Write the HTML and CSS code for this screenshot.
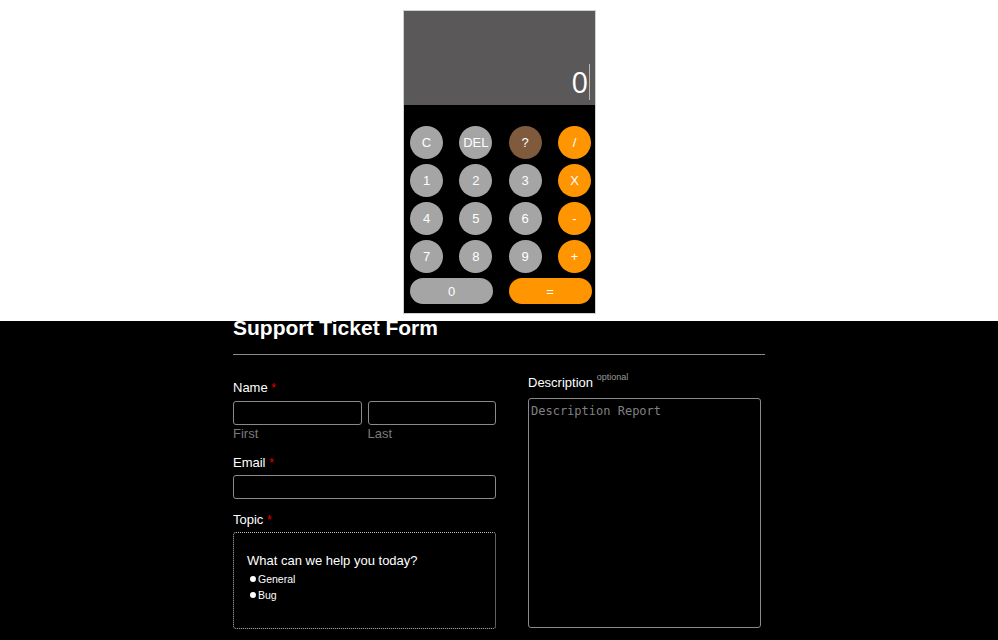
FILE: index.html
```html
<!DOCTYPE html>
<html>
<head>
<meta charset="utf-8">
<link rel="stylesheet" href="styles.css">
</head>
<body>
<section class="top">
  <div class="calc">
    <div class="display"><span class="value">0</span><span class="caret"></span></div>
    <div class="keys">
      <button class="key gray">C</button>
      <button class="key gray">DEL</button>
      <button class="key brown">?</button>
      <button class="key orange">/</button>
      <button class="key gray">1</button>
      <button class="key gray">2</button>
      <button class="key gray">3</button>
      <button class="key orange">X</button>
      <button class="key gray">4</button>
      <button class="key gray">5</button>
      <button class="key gray">6</button>
      <button class="key orange">-</button>
      <button class="key gray">7</button>
      <button class="key gray">8</button>
      <button class="key gray">9</button>
      <button class="key orange">+</button>
      <button class="key gray wide">0</button>
      <button class="key orange wide">=</button>
    </div>
  </div>
</section>
<section class="form-section">
  <div class="form-wrap">
    <h1 class="title">Support Ticket Form</h1>
    <hr class="rule">
    <div class="cols">
      <div class="col-left">
        <div class="label">Name <span class="req">*</span></div>
        <div class="name-row">
          <div class="name-field">
            <div class="input"></div>
            <div class="sub">First</div>
          </div>
          <div class="name-field">
            <div class="input"></div>
            <div class="sub">Last</div>
          </div>
        </div>
        <div class="label email-label">Email <span class="req">*</span></div>
        <div class="input"></div>
        <div class="label topic-label">Topic <span class="req">*</span></div>
        <div class="fieldset">
          <div class="question">What can we help you today?</div>
          <ul class="options">
            <li><span class="dot"></span>General</li>
            <li><span class="dot"></span>Bug</li>
          </ul>
        </div>
      </div>
      <div class="col-right">
        <div class="label desc-label">Description <sup class="opt">optional</sup></div>
        <div class="textarea"><span class="placeholder">Description Report</span></div>
      </div>
    </div>
  </div>
</section>
</body>
</html>
```
FILE: styles.css
```css
* { box-sizing: border-box; }
html, body { margin: 0; padding: 0; }
body {
  font-family: "Liberation Sans", Arial, sans-serif;
  background: #fff;
  height: 640px;
  overflow: hidden;
}
.top {
  height: 321px;
  background: #fff;
  padding-top: 10px;
  display: flex;
  justify-content: center;
}
.calc {
  width: 193px;
  height: 304px;
  border: 1px solid #d0d0d0;
  background: #000;
  margin-left: 1px;
  display: flex;
  flex-direction: column;
}
.display {
  height: 94px;
  background: #5a5858;
  display: flex;
  justify-content: flex-end;
  align-items: flex-end;
  padding: 0 5px 5px 0;
}
.value {
  color: #fff;
  font-family: "Open Sans", "Noto Sans", sans-serif;
  font-size: 29px;
  line-height: 36px;
  font-weight: 400;
}
.caret {
  width: 1px;
  height: 36px;
  background: #b8b8b8;
  margin-left: 1px;
}
.keys {
  display: grid;
  grid-template-columns: 33px 33px 33px 33px;
  grid-auto-rows: 33px;
  justify-content: space-between;
  row-gap: 5px;
  padding: 21px 4px 0 6px;
}
.key {
  border: none;
  border-radius: 50%;
  color: #fff;
  font-family: "Liberation Sans", Arial, sans-serif;
  font-size: 13px;
  padding: 0;
  width: 33px;
  height: 33px;
}
.gray { background: #a5a5a5; }
.orange { background: #ff9500; }
.brown { background: #7f5a3c; }
.wide {
  grid-column: span 2;
  width: 83px;
  height: 26px;
  border-radius: 13px;
}
.form-section {
  background: #000;
  height: 319px;
  display: flow-root;
}
.form-wrap {
  width: 532px;
  margin: 0 auto;
  color: #fff;
}
.title {
  margin: -6px 0 0 0;
  font-size: 21px;
  line-height: 26px;
  font-weight: bold;
  color: #fff;
}
.rule {
  margin: 13px 0 0 0;
  border: none;
  height: 1px;
  background: #8a8a8a;
}
.cols {
  display: grid;
  grid-template-columns: 263px 233px;
  column-gap: 32px;
}
.col-left { padding-top: 25px; }
.col-right { padding-top: 20px; }
.label {
  font-size: 13px;
  line-height: 16px;
  color: #fff;
}
.req { color: #e00000; font-size: 12px; }
.name-row {
  display: flex;
  gap: 6px;
  margin-top: 5px;
}
.name-field { flex: 1; }
.input {
  height: 24px;
  border: 1px solid #8a8a8a;
  border-radius: 3px;
  background: #000;
}
.sub {
  font-size: 13px;
  line-height: 16px;
  color: #7a7a7a;
  margin-top: 1px;
}
.email-label { margin-top: 13px; margin-bottom: 4px; }
.topic-label { margin-top: 13px; margin-bottom: 4px; }
.fieldset {
  height: 97px;
  border: 1px dotted #bdbdbd;
  border-radius: 3px;
  padding: 19px 13px 0 13px;
  width: 263px;
}
.question {
  font-size: 13px;
  line-height: 18px;
}
.options {
  list-style: none;
  margin: 1px 0 0 0;
  padding: 0 0 0 3px;
  font-size: 10.5px;
  line-height: 16px;
}
.options li { display: flex; align-items: center; }
.dot {
  width: 6px;
  height: 6px;
  border-radius: 50%;
  background: #fff;
  margin-right: 2px;
}
.desc-label { margin-bottom: 7px; }
.opt {
  font-size: 9px;
  color: #9a9a9a;
  vertical-align: 7px;
  line-height: 0;
}
.textarea {
  height: 230px;
  border: 1px solid #8a8a8a;
  border-radius: 3px;
  padding: 2px 2px;
}
.placeholder {
  font-family: "DejaVu Sans Mono", monospace;
  font-size: 12px;
  color: #808080;
}
```
